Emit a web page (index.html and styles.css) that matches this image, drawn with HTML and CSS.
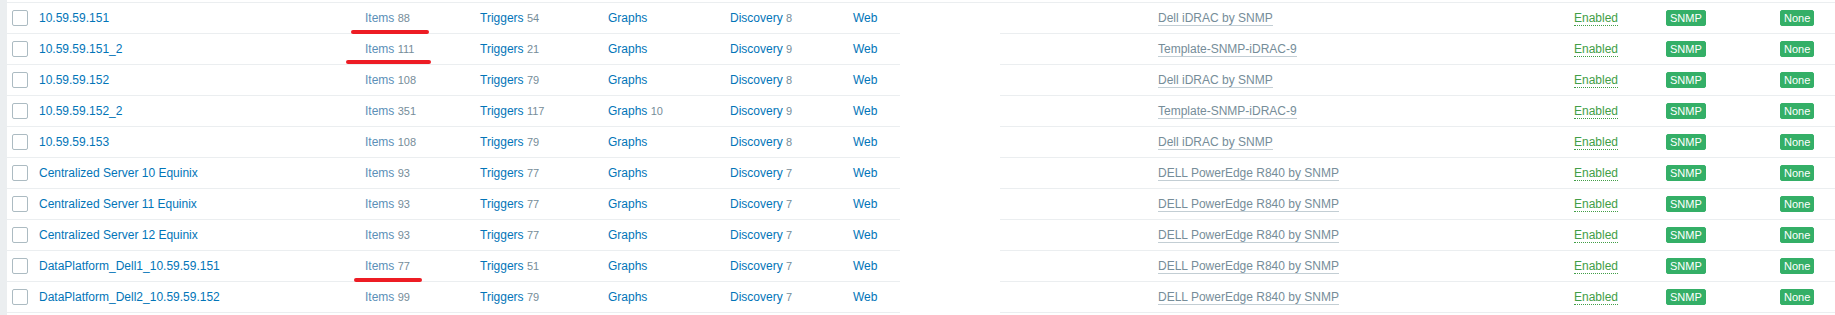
FILE: index.html
```html
<!DOCTYPE html>
<html lang="en">
<head>
    <meta charset="UTF-8">
    <title>Hosts</title>
    <link rel="stylesheet" href="styles.css">
</head>
<body>

    <div class="page">
        <table class="hosts">
            <colgroup>
                <col class="c-check">
                <col class="c-name">
                <col class="c-items">
                <col class="c-triggers">
                <col class="c-graphs">
                <col class="c-discovery">
                <col class="c-web">
                <col class="c-gap">
                <col class="c-blank">
                <col class="c-template">
                <col class="c-status">
                <col class="c-avail">
                <col class="c-enc">
            </colgroup>
            <tbody>
                <tr>
                    <td><span class="checkbox"></span></td>
                    <td><a class="link" href="#">10.59.59.151</a></td>
                    <td class="marked"><a class="link link-items" href="#">Items</a> <span class="count">88</span><span class="mark mark-1"></span></td>
                    <td><a class="link" href="#">Triggers</a> <span class="count">54</span></td>
                    <td><a class="link" href="#">Graphs</a></td>
                    <td><a class="link" href="#">Discovery</a> <span class="count">8</span></td>
                    <td><a class="link" href="#">Web</a></td>
                    <td class="gap"></td>
                    <td></td>
                    <td><a class="link-alt" href="#">Dell iDRAC by SNMP</a></td>
                    <td><a class="link-green" href="#">Enabled</a></td>
                    <td><span class="badge">SNMP</span></td>
                    <td><span class="badge">None</span></td>
                </tr>
                <tr>
                    <td><span class="checkbox"></span></td>
                    <td><a class="link" href="#">10.59.59.151_2</a></td>
                    <td class="marked"><a class="link link-items" href="#">Items</a> <span class="count">111</span><span class="mark mark-2"></span></td>
                    <td><a class="link" href="#">Triggers</a> <span class="count">21</span></td>
                    <td><a class="link" href="#">Graphs</a></td>
                    <td><a class="link" href="#">Discovery</a> <span class="count">9</span></td>
                    <td><a class="link" href="#">Web</a></td>
                    <td class="gap"></td>
                    <td></td>
                    <td><a class="link-alt" href="#">Template-SNMP-iDRAC-9</a></td>
                    <td><a class="link-green" href="#">Enabled</a></td>
                    <td><span class="badge">SNMP</span></td>
                    <td><span class="badge">None</span></td>
                </tr>
                <tr>
                    <td><span class="checkbox"></span></td>
                    <td><a class="link" href="#">10.59.59.152</a></td>
                    <td><a class="link link-items" href="#">Items</a> <span class="count">108</span></td>
                    <td><a class="link" href="#">Triggers</a> <span class="count">79</span></td>
                    <td><a class="link" href="#">Graphs</a></td>
                    <td><a class="link" href="#">Discovery</a> <span class="count">8</span></td>
                    <td><a class="link" href="#">Web</a></td>
                    <td class="gap"></td>
                    <td></td>
                    <td><a class="link-alt" href="#">Dell iDRAC by SNMP</a></td>
                    <td><a class="link-green" href="#">Enabled</a></td>
                    <td><span class="badge">SNMP</span></td>
                    <td><span class="badge">None</span></td>
                </tr>
                <tr>
                    <td><span class="checkbox"></span></td>
                    <td><a class="link" href="#">10.59.59.152_2</a></td>
                    <td><a class="link link-items" href="#">Items</a> <span class="count">351</span></td>
                    <td><a class="link" href="#">Triggers</a> <span class="count">117</span></td>
                    <td><a class="link" href="#">Graphs</a> <span class="count">10</span></td>
                    <td><a class="link" href="#">Discovery</a> <span class="count">9</span></td>
                    <td><a class="link" href="#">Web</a></td>
                    <td class="gap"></td>
                    <td></td>
                    <td><a class="link-alt" href="#">Template-SNMP-iDRAC-9</a></td>
                    <td><a class="link-green" href="#">Enabled</a></td>
                    <td><span class="badge">SNMP</span></td>
                    <td><span class="badge">None</span></td>
                </tr>
                <tr>
                    <td><span class="checkbox"></span></td>
                    <td><a class="link" href="#">10.59.59.153</a></td>
                    <td><a class="link link-items" href="#">Items</a> <span class="count">108</span></td>
                    <td><a class="link" href="#">Triggers</a> <span class="count">79</span></td>
                    <td><a class="link" href="#">Graphs</a></td>
                    <td><a class="link" href="#">Discovery</a> <span class="count">8</span></td>
                    <td><a class="link" href="#">Web</a></td>
                    <td class="gap"></td>
                    <td></td>
                    <td><a class="link-alt" href="#">Dell iDRAC by SNMP</a></td>
                    <td><a class="link-green" href="#">Enabled</a></td>
                    <td><span class="badge">SNMP</span></td>
                    <td><span class="badge">None</span></td>
                </tr>
                <tr>
                    <td><span class="checkbox"></span></td>
                    <td><a class="link" href="#">Centralized Server 10 Equinix</a></td>
                    <td><a class="link link-items" href="#">Items</a> <span class="count">93</span></td>
                    <td><a class="link" href="#">Triggers</a> <span class="count">77</span></td>
                    <td><a class="link" href="#">Graphs</a></td>
                    <td><a class="link" href="#">Discovery</a> <span class="count">7</span></td>
                    <td><a class="link" href="#">Web</a></td>
                    <td class="gap"></td>
                    <td></td>
                    <td><a class="link-alt" href="#">DELL PowerEdge R840 by SNMP</a></td>
                    <td><a class="link-green" href="#">Enabled</a></td>
                    <td><span class="badge">SNMP</span></td>
                    <td><span class="badge">None</span></td>
                </tr>
                <tr>
                    <td><span class="checkbox"></span></td>
                    <td><a class="link" href="#">Centralized Server 11 Equinix</a></td>
                    <td><a class="link link-items" href="#">Items</a> <span class="count">93</span></td>
                    <td><a class="link" href="#">Triggers</a> <span class="count">77</span></td>
                    <td><a class="link" href="#">Graphs</a></td>
                    <td><a class="link" href="#">Discovery</a> <span class="count">7</span></td>
                    <td><a class="link" href="#">Web</a></td>
                    <td class="gap"></td>
                    <td></td>
                    <td><a class="link-alt" href="#">DELL PowerEdge R840 by SNMP</a></td>
                    <td><a class="link-green" href="#">Enabled</a></td>
                    <td><span class="badge">SNMP</span></td>
                    <td><span class="badge">None</span></td>
                </tr>
                <tr>
                    <td><span class="checkbox"></span></td>
                    <td><a class="link" href="#">Centralized Server 12 Equinix</a></td>
                    <td><a class="link link-items" href="#">Items</a> <span class="count">93</span></td>
                    <td><a class="link" href="#">Triggers</a> <span class="count">77</span></td>
                    <td><a class="link" href="#">Graphs</a></td>
                    <td><a class="link" href="#">Discovery</a> <span class="count">7</span></td>
                    <td><a class="link" href="#">Web</a></td>
                    <td class="gap"></td>
                    <td></td>
                    <td><a class="link-alt" href="#">DELL PowerEdge R840 by SNMP</a></td>
                    <td><a class="link-green" href="#">Enabled</a></td>
                    <td><span class="badge">SNMP</span></td>
                    <td><span class="badge">None</span></td>
                </tr>
                <tr>
                    <td><span class="checkbox"></span></td>
                    <td><a class="link" href="#">DataPlatform_Dell1_10.59.59.151</a></td>
                    <td class="marked"><a class="link link-items" href="#">Items</a> <span class="count">77</span><span class="mark mark-9"></span></td>
                    <td><a class="link" href="#">Triggers</a> <span class="count">51</span></td>
                    <td><a class="link" href="#">Graphs</a></td>
                    <td><a class="link" href="#">Discovery</a> <span class="count">7</span></td>
                    <td><a class="link" href="#">Web</a></td>
                    <td class="gap"></td>
                    <td></td>
                    <td><a class="link-alt" href="#">DELL PowerEdge R840 by SNMP</a></td>
                    <td><a class="link-green" href="#">Enabled</a></td>
                    <td><span class="badge">SNMP</span></td>
                    <td><span class="badge">None</span></td>
                </tr>
                <tr>
                    <td><span class="checkbox"></span></td>
                    <td><a class="link" href="#">DataPlatform_Dell2_10.59.59.152</a></td>
                    <td><a class="link link-items" href="#">Items</a> <span class="count">99</span></td>
                    <td><a class="link" href="#">Triggers</a> <span class="count">79</span></td>
                    <td><a class="link" href="#">Graphs</a></td>
                    <td><a class="link" href="#">Discovery</a> <span class="count">7</span></td>
                    <td><a class="link" href="#">Web</a></td>
                    <td class="gap"></td>
                    <td></td>
                    <td><a class="link-alt" href="#">DELL PowerEdge R840 by SNMP</a></td>
                    <td><a class="link-green" href="#">Enabled</a></td>
                    <td><span class="badge">SNMP</span></td>
                    <td><span class="badge">None</span></td>
                </tr>
            </tbody>
        </table>
    </div>

</body>
</html>
```

FILE: styles.css
```css
/* General */
body {
    margin: 0;
    background-color: #ebeef0;
    font-family: "Liberation Sans", Arial, sans-serif;
    font-size: 12px;
}

.page {
    margin-left: 7px;
    padding-top: 2px;
    height: 313px;
    background-color: #fff;
}

/* Hosts table */
.hosts {
    width: 1828px;
    table-layout: fixed;
    border-collapse: separate;
    border-spacing: 0;
}

.c-check { width: 27px; }
.c-name { width: 326px; }
.c-items { width: 115px; }
.c-triggers { width: 128px; }
.c-graphs { width: 122px; }
.c-discovery { width: 123px; }
.c-web { width: 52px; }
.c-gap { width: 100px; }
.c-blank { width: 153px; }
.c-template { width: 416px; }
.c-status { width: 92px; }
.c-avail { width: 114px; }
.c-enc { width: 60px; }

.hosts td {
    height: 30px;
    padding: 0 0 0 5px;
    border-bottom: 1px solid #ebeef0;
    line-height: 14px;
    vertical-align: middle;
    white-space: nowrap;
    overflow: visible;
}

.hosts tr:first-child td {
    border-top: 1px solid #ebeef0;
}

.hosts td.gap {
    border-color: transparent;
}

.checkbox {
    display: block;
    width: 16px;
    height: 16px;
    box-sizing: border-box;
    border: 1px solid #acbbc2;
    border-radius: 2px;
    background: #fff;
}

/* Links */
a {
    text-decoration: none;
}

.link {
    color: #0275b8;
}

.link-items {
    color: #5b8fb8;
}

.count {
    color: #768d99;
    font-size: 11px;
}

.link-alt {
    color: #768d99;
    border-bottom: 1px solid #c3ced4;
}

.link-green {
    color: #429e47;
    border-bottom: 1px dotted #429e47;
}

/* Badges */
.badge {
    display: inline-block;
    vertical-align: middle;
    padding: 0 3px;
    font-size: 11px;
    line-height: 14px;
    color: #fff;
    background-color: #34af67;
    border: 1px solid #34af67;
    border-radius: 2px;
}

/* Red marker strokes */
.marked {
    position: relative;
}

.mark {
    position: absolute;
    height: 4px;
    border-radius: 2px;
    background-color: #ed1c24;
}

.mark-1 { top: 27px; left: -9px; width: 78px; }
.mark-2 { top: 26px; left: -14px; width: 85px; }
.mark-9 { top: 27px; left: -6px; width: 68px; }
```
